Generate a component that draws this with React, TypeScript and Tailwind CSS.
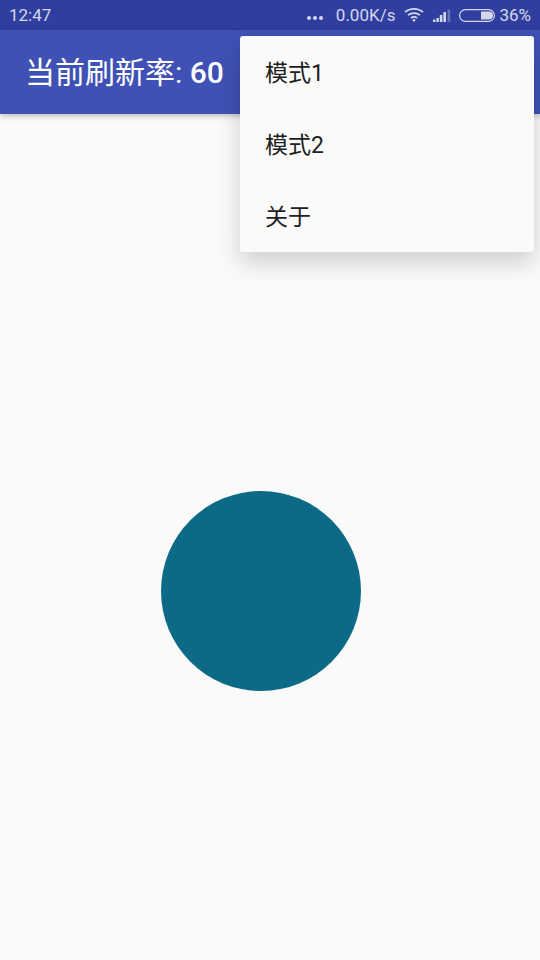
const font = "font-['Roboto','Noto_Sans_CJK_SC',sans-serif]";

function StatusBar() {
  return (
    <div className="h-[30px] bg-[#303f9f] flex items-center pl-[9px] pr-[9px] pt-[2px] text-[#d5d8ec] text-[17px] shrink-0">
      <span>12:47</span>
      <div className="ml-auto flex items-center">
        {/* overflow dots */}
        <svg width="18" height="6" viewBox="0 0 18 6" className="mr-[12px] mt-[4px]">
          <circle cx="3" cy="3" r="2" fill="#d5d8ec" />
          <circle cx="9" cy="3" r="2" fill="#d5d8ec" />
          <circle cx="15" cy="3" r="2" fill="#d5d8ec" />
        </svg>
        <span>0.00K/s</span>
        {/* wifi */}
        <svg width="20" height="15" viewBox="0 0 20 15" className="ml-[9px] mb-[3px]" fill="none" stroke="#d5d8ec" strokeWidth="1.7">
          <path d="M1 5.2C6 .8 14 .8 19 5.2" />
          <path d="M4 8.2c3.5-2.9 8.5-2.9 12 0" />
          <path d="M7 11c1.8-1.3 4.2-1.3 6 0" />
          <circle cx="10" cy="13.2" r="1.3" fill="#d5d8ec" stroke="none" />
        </svg>
        {/* signal */}
        <svg width="18" height="14" viewBox="0 0 18 14" className="ml-[9px]">
          <rect x="0" y="10.5" width="2.4" height="2.5" fill="#d5d8ec" />
          <rect x="3.4" y="9" width="2.4" height="4" fill="#d5d8ec" />
          <rect x="6.8" y="6" width="2.6" height="7" fill="#d5d8ec" />
          <rect x="10.4" y="3" width="2.6" height="10" fill="#d5d8ec" />
          <rect x="14.6" y="0.5" width="2.6" height="12.5" fill="#6673b8" />
        </svg>
        {/* battery */}
        <svg width="36" height="13" viewBox="0 0 36 13" className="ml-[8px] mb-[2px]">
          <rect x="0.6" y="0.6" width="34.8" height="11.8" rx="5.9" fill="none" stroke="#d5d8ec" strokeWidth="1.2" />
          <path d="M22 2.5h8a4 4 0 0 1 0 8h-8z" fill="#d5d8ec" />
        </svg>
        <span className="ml-[4px]">36%</span>
      </div>
    </div>
  );
}

function MenuItem({ label }: { label: string }) {
  return (
    <div className="h-[72px] flex items-center pl-[25px] pt-[4px] text-[23px] text-[#212121]">
      {label}
    </div>
  );
}

export default function App() {
  return (
    <div className={`relative w-[540px] h-[960px] overflow-hidden bg-[#fafafa] flex flex-col ${font}`}>
      <StatusBar />
      <div className="h-[84px] bg-[#3f51b5] shadow-[0_2px_6px_rgba(0,0,0,0.25)] flex items-center pl-[25px] text-white text-[30px] shrink-0">
        <span>当前刷新率: <span className="font-medium">60</span></span>
      </div>
      <div className="flex-1 flex flex-col items-start pt-[377px] pl-[161px]">
        <div className="w-[200px] h-[200px] rounded-full bg-[#0c6a87]" />
      </div>
      <div className="absolute left-[240px] top-[36px] w-[294px] h-[216px] rounded-[3px] bg-[#fafafa] shadow-[0_10px_24px_rgba(0,0,0,0.18)]">
        <MenuItem label="模式1" />
        <MenuItem label="模式2" />
        <MenuItem label="关于" />
      </div>
    </div>
  );
}
